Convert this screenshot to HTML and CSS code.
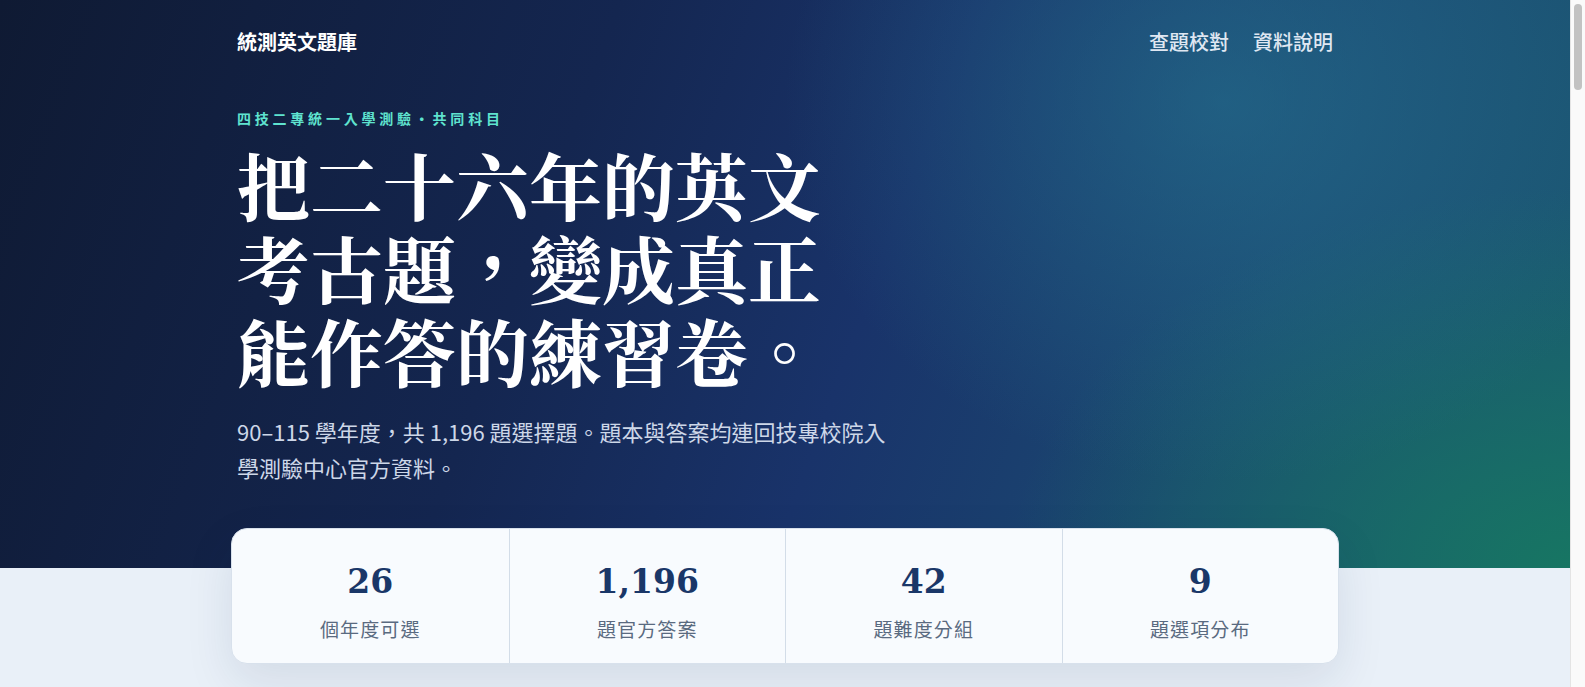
FILE: index.html
```html
<!DOCTYPE html>
<html lang="zh-Hant">
<head>
<meta charset="utf-8">
<title>統測英文題庫</title>
<link rel="stylesheet" href="styles.css">
</head>
<body>
<div class="page">
  <header class="hero">
    <div class="wrap">
      <nav class="topbar">
        <a class="brand" href="#">統測英文題庫</a>
        <div class="links">
          <a href="#">查題校對</a>
          <a href="#">資料說明</a>
        </div>
      </nav>
      <p class="eyebrow">四技二專統一入學測驗・共同科目</p>
      <h1 class="title">把二十六年的英文考古題，變成真正能作答的練習卷。</h1>
      <p class="lead">90–115 學年度，共 1,196 題選擇題。題本與答案均連回技專校院入學測驗中心官方資料。</p>
    </div>
  </header>
  <main class="main">
    <div class="wrap">
      <section class="stats">
        <div class="stat"><div class="num">26</div><div class="label">個年度可選</div></div>
        <div class="stat"><div class="num">1,196</div><div class="label">題官方答案</div></div>
        <div class="stat"><div class="num">42</div><div class="label">題難度分組</div></div>
        <div class="stat"><div class="num">9</div><div class="label">題選項分布</div></div>
      </section>
    </div>
  </main>
</div>
<div class="scrollbar" aria-hidden="true"><div class="thumb"></div></div>
</body>
</html>
```

FILE: styles.css
```css
* { box-sizing: border-box; }
html, body { margin: 0; padding: 0; }
body {
  background: #e9f0f8;
  font-family: "Noto Sans CJK TC", "Noto Sans", sans-serif;
  color: #1b2a44;
}
a { color: inherit; text-decoration: none; }

.page {
  margin-right: 15px;
}

.wrap {
  width: 1096px;
  margin: 0 auto;
}

.hero {
  height: 568px;
  color: #fff;
  background:
    radial-gradient(ellipse 440px 380px at 78% 18%, rgba(38, 118, 146, 0.55), rgba(38, 118, 146, 0) 100%),
    radial-gradient(ellipse 560px 380px at 100% 100%, rgba(22, 122, 96, 0.85), rgba(22, 122, 96, 0) 100%),
    linear-gradient(110deg, #0f1a33 0%, #142650 35%, #19336a 55%, #1b4a72 78%, #1b5a72 100%);
}

.topbar {
  height: 82px;
  display: flex;
  align-items: center;
  justify-content: space-between;
}
.brand {
  font-size: 20px;
  font-weight: 700;
}
.links {
  display: flex;
  gap: 24px;
  font-size: 20px;
  font-weight: 500;
  color: #dfe7f2;
}

.eyebrow {
  margin: 26px 0 0;
  font-size: 14px;
  line-height: 20px;
  font-weight: 700;
  letter-spacing: 0.27em;
  color: #5fe3cf;
}

.title {
  margin: 14px 0 0;
  max-width: 610px;
  font-family: "Noto Serif CJK TC", "Noto Serif CJK SC", serif;
  font-size: 73px;
  line-height: 83px;
  font-weight: 700;
  letter-spacing: 0;
}

.lead {
  margin: 22px 0 0;
  max-width: 655px;
  font-size: 22px;
  line-height: 36px;
  color: #cdd7e8;
}

.main {
  min-height: 4900px;
}
.stats {
  margin: -40px -6px 0;
  display: grid;
  grid-template-columns: repeat(4, 1fr);
  background: #f8fbfe;
  border: 1px solid #d8e1ec;
  border-radius: 16px;
  box-shadow: 0 18px 48px rgba(20, 40, 80, 0.10);
  height: 136px;
  overflow: hidden;
}
.stat {
  display: flex;
  flex-direction: column;
  align-items: center;
  padding-top: 33px;
  border-left: 1px solid #d3dde8;
}
.stat:first-child { border-left: 0; }
.num {
  font-family: "DejaVu Serif", "Liberation Serif", serif;
  font-weight: 700;
  font-size: 33px;
  line-height: 40px;
  color: #1a3768;
}
.label {
  margin-top: 14px;
  font-size: 19px;
  line-height: 26px;
  letter-spacing: 0.06em;
  color: #5a6a80;
}

.scrollbar {
  position: fixed;
  top: 0;
  right: 0;
  width: 15px;
  height: 100%;
  background: #fafafa;
  border-left: 1px solid #e4e4e4;
}
.thumb {
  margin: 4px 0 0 3px;
  width: 8px;
  height: 86px;
  border-radius: 4px;
  background: #c2c2c2;
}
```
